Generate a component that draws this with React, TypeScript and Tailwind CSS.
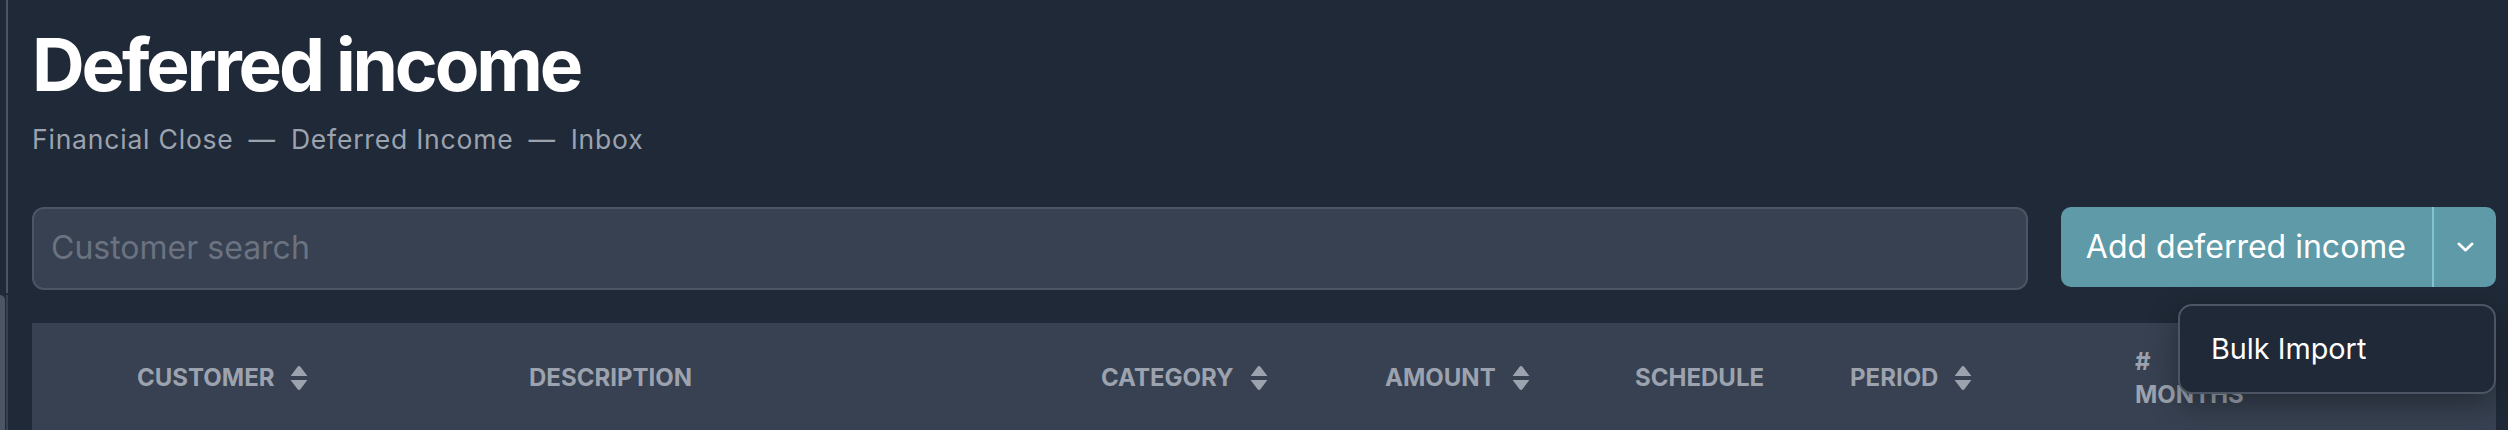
import React from "react";

function SortIcon() {
  return (
    <svg width="20" height="26" viewBox="0 0 20 26" className="shrink-0 text-[#9ca3af]" fill="currentColor">
      <path d="M8.6 1.8a1.6 1.6 0 0 1 2.8 0l7 9.2H1.6z" />
      <path d="M1.6 15h16.8l-7 9.2a1.6 1.6 0 0 1-2.8 0z" />
    </svg>
  );
}

const columns: { label: string; width: string; sortable: boolean }[] = [
  { label: "Customer", width: "w-[392px]", sortable: true },
  { label: "Description", width: "w-[572px]", sortable: false },
  { label: "Category", width: "w-[284px]", sortable: true },
  { label: "Amount", width: "w-[250px]", sortable: true },
  { label: "Schedule", width: "w-[215px]", sortable: false },
  { label: "Period", width: "w-[285px]", sortable: true },
];

export default function App() {
  return (
    <div className="flex min-h-screen overflow-hidden bg-[#1f2937] font-['Inter','Noto_Sans',sans-serif]">
      {/* sidebar edge */}
      <aside className="flex w-2 shrink-0 flex-col">
        <div className="h-[293px] border-r-2 border-[#4b5563]" />
        <div className="flex flex-1 pt-[2px]">
          <div className="w-[5px] rounded-tr-md bg-[#4b5563]" />
          <div className="ml-[1px] w-[2px] bg-[#374151]" />
        </div>
      </aside>

      <main className="min-w-0 flex-1 pl-6 pr-3 pt-[28px]">
        <h1 className="text-[73px] leading-none font-bold tracking-[-0.043em] text-white">Deferred income</h1>

        <nav className="mt-[25px] flex items-center gap-[15px] text-[26.5px] leading-none tracking-[0.03em] text-[#9ca3af]">
          <span>Financial Close</span>
          <span>—</span>
          <span>Deferred Income</span>
          <span>—</span>
          <span>Inbox</span>
        </nav>

        {/* search + actions */}
        <div className="mt-[54px] flex items-start gap-[33px]">
          <div className="flex h-[83px] flex-1 items-center rounded-[12px] border-2 border-[#4b5563] bg-[#374151] px-[17px]">
            <input
              placeholder="Customer search"
              className="w-full bg-transparent text-[32px] text-white outline-none placeholder:text-[#6b7280]"
            />
          </div>

          <div className="relative">
            <div className="flex h-[80px] overflow-hidden rounded-[10px] bg-[#5e9aa8] text-white">
              <button className="pl-[25px] pr-[26px] text-[32px]">Add deferred income</button>
              <button className="flex w-[64px] items-center justify-center border-l-2 border-[#80c4d0]">
                <svg width="17" height="10" viewBox="0 0 17 10" fill="none" stroke="currentColor" strokeWidth="2.6" strokeLinecap="round" strokeLinejoin="round">
                  <path d="M1.8 1.8 8.5 8.2l6.7-6.4" />
                </svg>
              </button>
            </div>

            <div className="absolute right-0 top-[97px] z-10 flex h-[90px] w-[318px] items-center rounded-[14px] border-2 border-[#4b5563] bg-[#1f2937] px-[31px] shadow-[0_10px_30px_rgba(0,0,0,0.35)]">
              <span className="text-[28.8px] text-white">Bulk Import</span>
            </div>
          </div>
        </div>

        {/* table header */}
        <div className="mt-[33px] flex h-[110px] items-center bg-[#374151] pl-[105px] text-[24px] font-bold uppercase text-[#9ca3af]">
          {columns.map((c) => (
            <div key={c.label} className={`flex shrink-0 items-center gap-[15px] ${c.width}`}>
              <span>{c.label}</span>
              {c.sortable && <SortIcon />}
            </div>
          ))}
          <div className="w-[110px] shrink-0 leading-[33px]"># Months</div>
        </div>
      </main>
    </div>
  );
}
